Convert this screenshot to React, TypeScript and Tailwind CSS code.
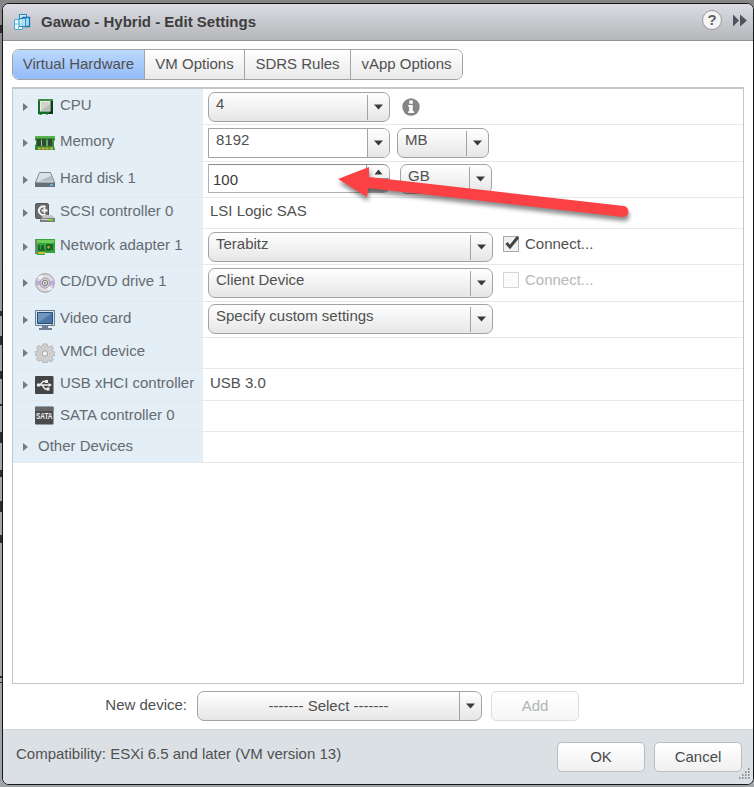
import React from "react";
import type { ReactNode } from "react";

function Caret({ up = false }: { up?: boolean }) {
  return (
    <svg width="9" height="6" viewBox="0 0 9 6" className="shrink-0">
      <path d={up ? "M0.5 5.5h8L4.5 0.5z" : "M0 0.5h9L4.5 5.5z"} fill="#3a3a3a" />
    </svg>
  );
}

function Select({ children, className, input = false, spread = false }: { children: ReactNode; className: string; input?: boolean; spread?: boolean }) {
  return (
    <div
      className={`flex h-[30px] shrink-0 border border-[#a3a3a3] ${input ? "rounded-r-[7px] bg-white" : "rounded-[7px] bg-linear-to-b from-white to-[#e6e6e6]"} ${className}`}
    >
      <div className={`grow whitespace-pre ${spread ? "text-center leading-[28px]" : "pl-[7px] leading-[22px]"}`}>{children}</div>
      <div className={`flex w-[22px] items-center justify-center ${input ? "rounded-r-[6px] bg-linear-to-b from-white to-[#e6e6e6]" : ""}`}>
        <div className={`w-px shrink-0 bg-[#a3a3a3] ${input || spread ? "h-full" : "h-[25px]"}`} />
        <div className="flex grow justify-center">
          <Caret />
        </div>
      </div>
    </div>
  );
}

function Spinner() {
  return (
    <div className="flex h-[29px] w-[182px] shrink-0 rounded-r-[7px] border border-[#b0b0b0] border-t-[#8a8a8a] bg-white">
      <div className="grow pl-1 leading-[29px] text-[#3a3a3a]">100</div>
      <div className="flex w-[23px] flex-col rounded-r-[6px] border-l border-[#999]">
        <div className="flex grow items-center justify-center rounded-tr-[6px] border-b border-[#999] bg-linear-to-b from-white to-[#eee]">
          <Caret up />
        </div>
        <div className="flex grow items-center justify-center rounded-br-[6px] bg-linear-to-b from-[#ddd] to-[#aaa]">
          <Caret />
        </div>
      </div>
    </div>
  );
}

function Connect({ checked = false }: { checked?: boolean }) {
  return (
    <div className={`ml-[9px] flex pt-[3px] ${checked ? "text-[#505050]" : "text-[#b4b9b9]"}`}>
      <svg width="19" height="18" viewBox="0 0 19 18">
        <rect x="1.5" y="1.5" width="15" height="15" fill={checked ? "#f1f1f1" : "#fbfbfb"} stroke={checked ? "#aaa" : "#d5d5d5"} />
        {checked && <path d="M4.5 8 8 12 16 2" fill="none" stroke="#444" strokeWidth="3" />}
      </svg>
      <span className="pl-[4px] leading-[18px]">Connect...</span>
    </div>
  );
}

const icons: Record<string, ReactNode> = {
  cpu: (
    <>
      <path d="M3 2h15v15h-5l-1 1-1-1H7l-1 1-3-1z" fill="#176b25" />
      <path d="M3 2h15v2H3z" fill="#3f8d46" />
      <path d="M15 4h3v13h-4z" fill="#0a3f15" />
      <rect x="5.5" y="4.5" width="9.5" height="9.5" fill="#cfd2cd" stroke="#e9eee7" />
      <path d="M6 14h9V7z" fill="#b9beb8" />
    </>
  ),
  memory: (
    <>
      <path d="M0 3h20v4l-1 1v5l1 4H0v-5l1-1V8L0 7z" fill="#358b38" />
      <path d="M0 3h20v2H0z" fill="#5ab34d" />
      <path d="M2 6h4v7H2zm5 0h4v7H7zm6 0h4v7h-4z" fill="#294c32" />
      <path d="M6.5 7v6M12 7v6" stroke="#9dc883" />
      <path d="M3 14.5h15v2H3z" fill="#d1b546" />
      <path d="M6 14v3m4-3v3m4-3v3" stroke="#497e27" />
    </>
  ),
  disk: (
    <>
      <path d="M4.5 2.5h11l4 10H.5z" fill="#c9d0d6" stroke="#7e8992" />
      <path d="M5 3h10l3 8H2z" fill="#b3bbc2" />
      <path d="M5 3h10l1 3-12 5H2z" fill="#dde1e4" />
      <path d="M0 12h20v5H0z" fill="#667079" />
      <path d="M1 12.5h18" stroke="#9aa5ae" />
      <path d="M15 15h3" stroke="#76c8f2" strokeWidth="1.5" />
    </>
  ),
  scsi: (
    <>
      <rect x="0.5" y="0.5" width="13" height="15" rx="1.5" fill="#6a6a6a" stroke="#555" />
      <path d="M10.5 4.2A4.2 4.2 0 1 0 10.5 11.2M6.5 7.5h6M9.5 5v5" fill="none" stroke="#f4f4f4" strokeWidth="2" />
      <path d="M8 12h9l3 3v4H5z" fill="#c5c8cb" />
      <path d="M5 15h15v4H5z" fill="#7a7d80" />
      <path d="M6 16h12v1H6z" fill="#ddd" />
      <path d="M14 16h4v2h-4z" fill="#7fd321" />
    </>
  ),
  network: (
    <>
      <path d="M0 2h20v14H10v2H2v-2H0z" fill="#35a63a" />
      <path d="M2 3h17v3H2z" fill="#6ed05b" />
      <path d="M0 2h2v15H0z" fill="#738a70" />
      <path d="M4 8v5h3V9h1v4h2M12 8h3v5h-3zM17 7v6" fill="none" stroke="#16592b" strokeWidth="1.5" />
      <path d="M3 15h7v2H3z" fill="#d9bb3c" />
      <path d="M12.5 10h2" stroke="#e69b35" strokeWidth="2" />
    </>
  ),
  cd: (
    <>
      <circle cx="10" cy="10" r="9.3" fill="#dedbdf" stroke="#9a9a9a" />
      <path d="M10 10 1 7v6zM10 10l9-3v6z" fill="#c1add9" />
      <path d="m10 10-8-6 5-2zm0 0 8 6-5 2z" fill="#f2f0f2" />
      <circle cx="10" cy="10" r="5" fill="#cfcad4" stroke="#a49fac" />
      <circle cx="10" cy="10" r="2.6" fill="#eee" stroke="#777" />
      <circle cx="10" cy="10" r="1" fill="#777" />
    </>
  ),
  video: (
    <>
      <path d="M0.5.5h19v15H0.5z" fill="#dce3ec" stroke="#6b7f94" />
      <path d="M2.5 2.5h15v11h-15z" fill="#4a76a9" stroke="#284b73" />
      <path d="M3 3h14L3 13z" fill="#6f96c0" />
      <path d="M7 16h6v2h4v2H4v-2h3z" fill="#6d8095" />
      <path d="M16 14.5h2" stroke="#77bb3b" />
    </>
  ),
  gear: (
    <>
      <path d="m8 1 4 0 .5 2.5 1.5.7 2.4-1.5 2 2.2L17 7l.8 1.7 2.2.5v3l-2.3.7-.7 1.6 1.4 2.2-2.2 2.2-2.3-1.4-1.6.7L12 20H8l-.6-2.2-1.7-.7L3.5 18.3l-2-2.2 1.3-2.2-.7-1.5L0 12V8.8l2.2-.5.7-1.7L1.6 4.7l2.2-2.2L6 4l1.5-.7z" fill="#d0d0d0" stroke="#b3b3b3" />
      <circle cx="10" cy="10.5" r="4.7" fill="#dedede" stroke="#c4c4c4" />
      <circle cx="10" cy="10.5" r="2.8" fill="#e7f0f7" stroke="#999" />
    </>
  ),
  usb: (
    <>
      <rect y="1" width="18.5" height="18" rx="1" fill="#454545" />
      <path d="M3 10h11M5 10l3-3.5h3M7 10l3 4h3" stroke="#eee" fill="none" strokeWidth="1.4" />
      <circle cx="3.5" cy="10" r="1.8" fill="#eee" />
      <path d="m13.5 8 3.5 2-3.5 2zM10 5h3v3h-3zM11.5 12.5h3v3h-3z" fill="#eee" />
    </>
  ),
  sata: (
    <>
      <rect y="0.5" width="18.5" height="18" rx="1" fill="#4c4c4c" />
      <path d="M0 1h18.5v4H0z" fill="#666" />
      <text x="0.9" y="9" transform="scale(1 1.4)" textLength="16.6" lengthAdjust="spacingAndGlyphs" fill="#eee" fontSize="6.5" fontWeight="bold">SATA</text>
    </>
  ),
};

type RowProps = { label: string; icon?: string; height: string; line: string; arrow?: boolean; pad?: string; children?: ReactNode };

function Row({ label, icon, height, line, arrow = true, pad = "pl-[5px] pt-[3px]", children }: RowProps) {
  return (
    <div className={`flex shrink-0 border-b border-[#e6e9eb] ${height}`}>
      <div className="flex w-[190px] shrink-0 bg-[#e4eef6]">
        <div className="flex w-[22px] shrink-0 items-center pl-[10px]">
          {arrow && (
            <svg width="5" height="8" viewBox="0 0 5 8">
              <path d="M0 0v8l5-4z" fill="#737b82" />
            </svg>
          )}
        </div>
        {icon && (
          <div className="flex w-[25px] shrink-0 items-center">
            <svg width="20" height="20" viewBox="0 0 20 20">{icons[icon]}</svg>
          </div>
        )}
        <span className={`whitespace-nowrap text-[#646b71] ${icon ? "" : "pl-[3px]"} ${line}`}>{label}</span>
      </div>
      <div className={`flex grow items-start ${pad}`}>{children}</div>
    </div>
  );
}

function Button({ children, disabled = false }: { children: ReactNode; disabled?: boolean }) {
  return (
    <div
      className={`flex h-[30px] w-[88px] shrink-0 items-center justify-center rounded-[5px] border bg-linear-to-b from-white ${disabled ? "border-[#dedede] to-[#f6f6f6] text-[#b0b5b5]" : "border-[#b9bdc0] to-[#f0f0f0] text-[#4a4a4a]"}`}
    >
      {children}
    </div>
  );
}

export default function App() {
  const tabs = [
    ["Virtual Hardware", "w-[131px] bg-linear-to-b from-[#bad9fc] to-[#94baf9] rounded-l-[6px]"],
    ["VM Options", "w-[100px] border-l border-[#a3a3a3] bg-linear-to-b from-white to-[#e9e9e9]"],
    ["SDRS Rules", "w-[106px] border-l border-[#a3a3a3] bg-linear-to-b from-white to-[#e9e9e9]"],
    ["vApp Options", "w-[112px] border-l border-[#a3a3a3] bg-linear-to-b from-white to-[#e9e9e9] rounded-r-[6px]"],
  ];
  const tall = "h-[36px]";
  const tallPlus = "h-[37px]";
  const textPad = "pl-[7px]";
  return (
    <div className="relative flex h-[787px] w-[754px] flex-col overflow-hidden bg-linear-to-b from-[#868686] via-[#a3a7aa] to-[#a1a4a6] pt-[3px] pl-[2px] font-['Liberation_Sans',Arial,sans-serif] text-[15px] text-[#505050]">
      <div className="flex h-[782px] w-[752px] flex-col overflow-hidden rounded-[7px] border border-[#151515] bg-white">
        <header className="flex h-[37px] shrink-0 items-center border-b border-[#929292] bg-linear-to-b from-[#dcdde5] to-[#b5b6b9] pl-[10px]">
          <svg width="18" height="18" viewBox="0 0 18 18">
            <path d="M6.5 1.5h7v8h-7z" fill="#c8effc" stroke="#257db3" />
            <path d="M9.5 4.5h7v9h-7z" fill="#a5def6" stroke="#1d77ae" strokeWidth="1.3" />
            <path d="M1.5 6.5h8v10h-8z" fill="#e1f7fd" stroke="#54a6cf" />
            <path d="M6 5.5h6.5v8H6z" fill="#c2ecfb" fillOpacity=".7" stroke="#2c89bc" />
            <path d="M2 11h7M5.5 7v9" stroke="#7cc2df" />
          </svg>
          <h1 className="pl-[10px] text-[15px] font-bold text-[#3d3d3d]">Gawao - Hybrid - Edit Settings</h1>
          <div className="ml-auto flex items-center gap-[10px] pr-[6px] pb-1">
            <div className="flex size-[20px] items-center justify-center rounded-full border border-[#999] bg-[#f5f5f5] text-[15px] font-bold text-[#5c5f68]">?</div>
            <svg width="15" height="13" viewBox="0 0 15 13">
              <path d="M1 0.5v12l6-6zM8 0.5v12l7-6z" fill="#51535d" />
            </svg>
          </div>
        </header>

        <div className="flex grow flex-col px-[9px] pt-[8px]">
          <nav className="flex h-[31px] w-[451px] shrink-0 rounded-[7px] border border-[#a3a3a3]">
            {tabs.map(([name, style]) => (
              <div key={name} className={`flex items-center justify-center whitespace-nowrap ${style}`}>{name}</div>
            ))}
          </nav>
          <main className="mt-[7px] flex h-[597px] shrink-0 flex-col border border-t-2 border-[#c4c7c9]">
            <Row label="CPU" icon="cpu" height={tall} line="leading-[32px]">
              <Select className="w-[182px]">4</Select>
              <svg width="18" height="18" viewBox="0 0 18 18" className="mt-[6px] ml-[12px]">
                <circle cx="9" cy="9" r="8.7" fill="#858585" />
                <path d="M7.3 2.6h3.5v3.2H7.3zM6.2 7h4.6v6.2h1.4v1.8H6.2v-1.8h1V8.8h-1z" fill="#fff" />
              </svg>
            </Row>
            <Row label="Memory" icon="memory" height={tallPlus} line="leading-[32px]">
              <Select className="w-[182px]" input>8192</Select>
              <Select className="ml-[7px] w-[92px]">MB</Select>
            </Row>
            <Row label="Hard disk 1" icon="disk" height={tall} line="leading-[32px]" pad="pl-[5px] pt-[2px]">
              <Spinner />
              <Select className="ml-[10px] w-[92px]">GB</Select>
            </Row>
            <Row label="SCSI controller 0" icon="scsi" height="h-[31px]" line="leading-[26px]" pad={textPad}>
              <span className="leading-[26px]">LSI Logic SAS</span>
            </Row>
            <Row label="Network adapter 1" icon="network" height={tall} line="leading-[32px]">
              <Select className="w-[285px]">Terabitz</Select>
              <Connect checked />
            </Row>
            <Row label="CD/DVD drive 1" icon="cd" height={tallPlus} line="leading-[32px]">
              <Select className="w-[285px]">Client Device</Select>
              <Connect />
            </Row>
            <Row label="Video card" icon="video" height={tall} line="leading-[32px]" pad="pl-[5px] pt-[2px]">
              <Select className="w-[285px]">Specify custom settings</Select>
            </Row>
            <Row label="VMCI device" icon="gear" height="h-[31px]" line="leading-[26px]" />
            <Row label="USB xHCI controller" icon="usb" height="h-[32px]" line="leading-[28px]" pad={textPad}>
              <span className="leading-[28px]">USB 3.0</span>
            </Row>
            <Row label="SATA controller 0" icon="sata" height="h-[31px]" line="leading-[27px]" arrow={false} />
            <Row label="Other Devices" height="h-[31px]" line="leading-[27px]" />
          </main>
          <div className="flex pt-[7px]">
            <span className="w-[185px] pr-[10px] text-right leading-[27px]">New device:</span>
            <Select className="w-[285px]" spread>------- Select -------</Select>
            <div className="ml-[9px]">
              <Button disabled>Add</Button>
            </div>
          </div>
        </div>

        <footer className="flex h-[55px] shrink-0 gap-[9px] border-t border-[#d2d6d9] bg-[#dbe0e5] pt-[12px] pr-[11px] pl-[13px]">
          <span className="mr-auto leading-[23px]">Compatibility: ESXi 6.5 and later (VM version 13)</span>
          <Button>OK</Button>
          <Button>Cancel</Button>
        </footer>
      </div>

      <svg width="3" height="787" viewBox="0 0 3 787" className="absolute top-0 left-0">
        <path d="M0 25h2v8H0zM0 311h2v5H0zM0 336h2v9H0zM0 371h2v8H0zM0 404h2v2H0zM0 432h2v11H0zM0 470h2v7H0zM0 501h2v11H0zM0 535h2v8H0zM0 676h2v2H0zM0 682h2v1H0z" fill="#2b2d30" />
      </svg>

      <svg width="12" height="12" viewBox="0 0 12 12" className="absolute top-[768px] left-[738px]">
        <path d="M10 1h2M7 4h2m1 0h2M4 7h2m1 0h2m1 0h2M1 10h2m1 0h2m1 0h2m1 0h2" stroke="#777" strokeWidth="1.5" strokeDasharray="1.5 1.5" />
      </svg>

      <svg width="310" height="75" viewBox="0 0 310 75" className="absolute top-[158px] left-[330px] overflow-visible [filter:drop-shadow(1px_4px_2px_rgba(0,0,0,0.45))]">
        <path d="m8 21 31-12v10l255 29c6 1 6 11-1 11L38 30l-1 9z" fill="#fc4144" />
      </svg>
    </div>
  );
}
